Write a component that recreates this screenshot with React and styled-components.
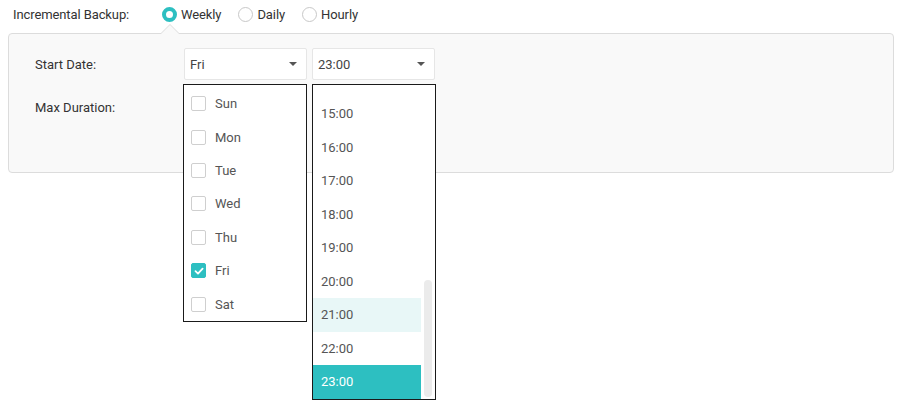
import React from 'react';
import styled, { createGlobalStyle, css } from 'styled-components';

const GlobalStyle = createGlobalStyle`
  html, body {
    margin: 0;
    padding: 0;
    background: #fff;
    font-family: Roboto, "Liberation Sans", Arial, sans-serif;
    font-size: 13px;
    color: #333;
  }
`;

const TEAL = '#2dbfc1';

const Page = styled.div`
  box-sizing: border-box;
  min-height: 402px;
  padding: 6px 6px 0 8px;
  width: 900px;
`;

const TopRow = styled.div`
  display: flex;
  align-items: center;
  height: 17px;
  padding-left: 5px;
`;

const TopLabel = styled.div`
  width: 149px;
  color: #333;
  letter-spacing: -0.1px;
`;

const RadioGroup = styled.div`
  display: flex;
  align-items: center;
  gap: 17px;
`;

const RadioItem = styled.label`
  display: flex;
  align-items: center;
  gap: 4px;
  color: #333;
  letter-spacing: -0.1px;
`;

const RadioDot = styled.span`
  box-sizing: border-box;
  width: 15px;
  height: 15px;
  border-radius: 50%;
  background: #fff;
  border: 1px solid #c8c8c8;
  ${(p) =>
    p.$on &&
    css`
      border: 4px solid ${TEAL};
    `}
`;

const Panel = styled.div`
  position: relative;
  margin-top: 10px;
  box-sizing: border-box;
  width: 886px;
  height: 140px;
  border: 1px solid #dcdcdc;
  border-radius: 4px;
  background: #f9f9f9;
  padding: 14px 0 0 26px;

  &::before,
  &::after {
    content: '';
    position: absolute;
    left: 151px;
    width: 0;
    height: 0;
    border-left: 10px solid transparent;
    border-right: 10px solid transparent;
  }
  &::before {
    top: -10px;
    border-bottom: 10px solid #dcdcdc;
  }
  &::after {
    top: -9px;
    border-bottom: 10px solid #f9f9f9;
  }
`;

const FormRow = styled.div`
  display: flex;
  align-items: ${(p) => p.$align || 'center'};
  margin-bottom: ${(p) => p.$gap || 0}px;
`;

const FieldLabel = styled.div`
  width: 149px;
  color: #333;
  padding-top: ${(p) => p.$top || 0}px;
`;

const Controls = styled.div`
  display: flex;
  gap: 5px;
`;

const SelectWrap = styled.div`
  position: relative;
`;

const SelectBox = styled.div`
  box-sizing: border-box;
  width: 123px;
  height: 32px;
  background: #fff;
  border: 1px solid #e6e6e6;
  border-radius: 2px;
  display: flex;
  align-items: center;
  justify-content: space-between;
  padding: 0 9px 0 5px;
  color: #444;
`;

const Caret = styled.span`
  width: 0;
  height: 0;
  border-left: 4px solid transparent;
  border-right: 4px solid transparent;
  border-top: 4px solid #555;
`;

const Menu = styled.div`
  position: absolute;
  z-index: 5;
  top: 36px;
  left: ${(p) => p.$left}px;
  box-sizing: border-box;
  width: 124px;
  height: ${(p) => p.$height}px;
  background: #fff;
  border: 1px solid #1a1a1a;
  overflow: hidden;
  display: flex;
`;

const DayList = styled.div`
  padding-top: 2px;
  width: 100%;
`;

const DayItem = styled.div`
  height: 33.4px;
  display: flex;
  align-items: center;
  gap: 9px;
  padding-left: 7px;
  color: #555;
`;

const Check = styled.span`
  box-sizing: border-box;
  width: 15px;
  height: 15px;
  border: 1px solid #cfcfcf;
  border-radius: 2px;
  background: #fff;
  display: flex;
  align-items: center;
  justify-content: center;
  ${(p) =>
    p.$on &&
    css`
      background: ${TEAL};
      border-color: ${TEAL};
    `}
`;

const TimeList = styled.div`
  width: 108px;
  padding-top: 12px;
`;

const TimeItem = styled.div`
  height: 33.5px;
  display: flex;
  align-items: center;
  padding-left: 8px;
  color: #555;
  ${(p) =>
    p.$state === 'hover' &&
    css`
      background: #e8f7f7;
    `}
  ${(p) =>
    p.$state === 'selected' &&
    css`
      background: ${TEAL};
      color: #fff;
    `}
`;

const ScrollTrack = styled.div`
  position: relative;
  flex: 1;
`;

const ScrollThumb = styled.div`
  position: absolute;
  left: 3px;
  bottom: 2px;
  width: 8px;
  height: 117px;
  border-radius: 4px;
  background: #ebebeb;
`;

const DurationBox = styled.div`
  box-sizing: border-box;
  width: 123px;
  height: 42px;
  background: #fff;
  border: 1px solid #e6e6e6;
  border-radius: 2px;
`;

const days = ['Sun', 'Mon', 'Tue', 'Wed', 'Thu', 'Fri', 'Sat'];
const hours = ['15:00', '16:00', '17:00', '18:00', '19:00', '20:00', '21:00', '22:00', '23:00'];

const CheckMark = () => (
  <svg width="10" height="10" viewBox="0 0 10 10">
    <path d="M1.5 5.2 L4 7.6 L8.6 2.6" fill="none" stroke="#fff" strokeWidth="1.8" strokeLinecap="round" strokeLinejoin="round" />
  </svg>
);

export default function App() {
  return (
    <>
      <GlobalStyle />
      <Page>
        <TopRow>
          <TopLabel>Incremental Backup:</TopLabel>
          <RadioGroup>
            <RadioItem><RadioDot $on />Weekly</RadioItem>
            <RadioItem><RadioDot />Daily</RadioItem>
            <RadioItem><RadioDot />Hourly</RadioItem>
          </RadioGroup>
        </TopRow>
        <Panel>
          <FormRow $gap={6}>
            <FieldLabel>Start Date:</FieldLabel>
            <Controls>
              <SelectWrap>
                <SelectBox>Fri<Caret /></SelectBox>
                <Menu $left={-1} $height={238}>
                  <DayList>
                    {days.map((d) => (
                      <DayItem key={d}>
                        <Check $on={d === 'Fri'}>{d === 'Fri' && <CheckMark />}</Check>
                        {d}
                      </DayItem>
                    ))}
                  </DayList>
                </Menu>
              </SelectWrap>
              <SelectWrap>
                <SelectBox>23:00<Caret /></SelectBox>
                <Menu $left={0} $height={316}>
                  <TimeList>
                    {hours.map((h) => (
                      <TimeItem
                        key={h}
                        $state={h === '23:00' ? 'selected' : h === '21:00' ? 'hover' : undefined}
                      >
                        {h}
                      </TimeItem>
                    ))}
                  </TimeList>
                  <ScrollTrack><ScrollThumb /></ScrollTrack>
                </Menu>
              </SelectWrap>
            </Controls>
          </FormRow>
          <FormRow $align="flex-start">
            <FieldLabel $top={14}>Max Duration:</FieldLabel>
            <DurationBox />
          </FormRow>
        </Panel>
      </Page>
    </>
  );
}
